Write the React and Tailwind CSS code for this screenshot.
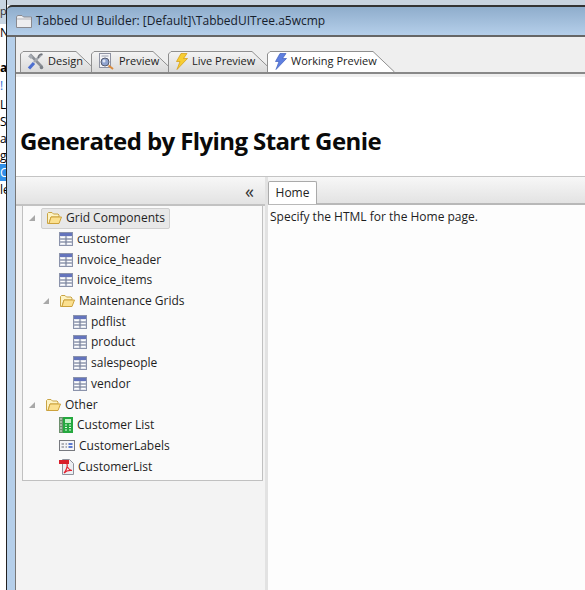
const font = { fontFamily: '"Open Sans", "Noto Sans", sans-serif' };

function FolderIcon() {
  return (
    <svg width="16" height="14" viewBox="0 0 16 14" className="shrink-0">
      <path d="M1.5 12.5V2.5L2.5 1.5H6L7.5 3H12L13 4V6H5L3 12.5Z" fill="#fdf3c4" stroke="#c9a445" />
      <path d="M3 12.5L5 6H15.5L13 12.5Z" fill="#fbe08f" stroke="#cda23c" />
    </svg>
  );
}

function GridIcon() {
  return (
    <svg width="14" height="14" viewBox="0 0 14 14" className="shrink-0">
      <rect x="0.5" y="0.5" width="13" height="13" fill="#e4e7ef" stroke="#8b93ab" />
      <rect x="1" y="1" width="12" height="3" fill="#6474bc" />
      <path d="M7 4V13M1 7H13M1 10H13" stroke="#6f7893" />
      <path d="M2 5.5H5.5M8.5 5.5H12M2 8.5H5.5M8.5 8.5H12M2 11.5H5.5M8.5 11.5H12" stroke="#fff" />
    </svg>
  );
}

function ListIcon() {
  return (
    <svg width="14" height="16" viewBox="0 0 14 16" className="shrink-0">
      <rect x="0" y="0" width="4" height="16" fill="#6d8f6d" />
      <path d="M1 2H3M1 5H3M1 8H3M1 11H3M1 14H3" stroke="#dfe9df" />
      <rect x="4" y="0" width="10" height="16" fill="#25a83f" />
      <rect x="6" y="2" width="6" height="4" fill="#c6f2c8" />
      <path d="M6 8H8M10 8H12M6 10.5H8M10 10.5H12M6 13H8M10 13H12" stroke="#e8fbe8" />
    </svg>
  );
}

function LabelIcon() {
  return (
    <svg width="16" height="11" viewBox="0 0 16 11" className="shrink-0">
      <rect x="0.5" y="0.5" width="15" height="10" fill="#f4f4f6" stroke="#77797f" />
      <path d="M2.5 4H5M6.5 4H8M2.5 7H5M6.5 7H8" stroke="#6a6d78" />
      <rect x="9.5" y="3" width="4" height="2" fill="#5d7bd0" />
      <rect x="9.5" y="6" width="4" height="2" fill="#5d7bd0" />
    </svg>
  );
}

function PdfIcon() {
  return (
    <svg width="15" height="16" viewBox="0 0 15 16" className="shrink-0">
      <path d="M3.5 0.5H10.5L14.5 4.5V15.5H3.5Z" fill="#eceef2" stroke="#8e929c" />
      <rect x="0" y="1" width="10" height="4" fill="#d81e2a" />
      <path d="M5 14C7 12 9 7 8 5C8 8 10 11 13 11.5C10 11 7 12 5 14Z" fill="none" stroke="#e3212d" strokeWidth="1.2" />
    </svg>
  );
}

function BoltIcon({ fill, edge }) {
  return (
    <svg width="13" height="17" viewBox="0 0 13 17" className="shrink-0">
      <path d="M6 0.5H12L8.5 5.5H12.5L2 16.5L5 8.5H1.5Z" fill={fill} stroke={edge} strokeWidth="0.7" />
    </svg>
  );
}

function ToolsIcon() {
  return (
    <svg width="17" height="17" viewBox="0 0 17 17" className="shrink-0">
      <path d="M3 1.5L15 14" stroke="#8b8f96" strokeWidth="2.6" />
      <path d="M1 3.5L3.5 1L6 4L4 6Z" fill="#a7abb2" />
      <path d="M15 1L10 6L7 9" stroke="#a5a9b0" strokeWidth="2.4" fill="none" />
      <path d="M7 10L2 15.5" stroke="#4d6fd0" strokeWidth="3.2" />
      <circle cx="14.5" cy="14.5" r="1.8" fill="#7d8188" />
      <path d="M15.5 1.5A3 3 0 0 0 11.5 5" stroke="#70747b" strokeWidth="1.5" fill="none" />
    </svg>
  );
}

function PreviewIcon() {
  return (
    <svg width="17" height="17" viewBox="0 0 17 17" className="shrink-0">
      <rect x="1.5" y="0.5" width="11" height="14" fill="#f3f3f6" stroke="#8e92a2" />
      <path d="M3.5 3H10.5" stroke="#9aa0b0" />
      <circle cx="7" cy="9" r="4" fill="#8fa3cf" stroke="#565c70" />
      <circle cx="6" cy="8" r="1.5" fill="#dfe7f7" />
      <path d="M10.5 12.5L15 16" stroke="#d98a3d" strokeWidth="2" />
    </svg>
  );
}

function MainTab({ label, icon, width, active, first }) {
  return (
    <div className={`relative h-[21px] shrink-0 ${first ? "" : "-ml-[7px]"} ${active ? "z-10" : ""}`} style={{ width }}>
      <svg width={width} height="21" className="absolute left-0 top-0">
        <defs>
          <linearGradient id="tabfill" x1="0" y1="0" x2="0" y2="1">
            <stop offset="0" stopColor="#f4f4f4" />
            <stop offset="1" stopColor="#dadada" />
          </linearGradient>
        </defs>
        <path
          d={`M0.5 21V3L3 0.5H${width - 22}L${width - 1} 20.5V21`}
          fill={active ? "#ffffff" : "url(#tabfill)"}
          stroke="#8f8f8f"
        />
      </svg>
      <div className="relative flex items-center h-full pl-[7px] gap-[4px] text-[11px] text-[#1c1c1c]">
        {icon}
        <span>{label}</span>
      </div>
    </div>
  );
}

function TreeRow({ indent, arrow, icon, label, selected }) {
  return (
    <div className="flex items-center h-[20.7px]" style={{ paddingLeft: indent }}>
      <span className="w-[12px] shrink-0 flex items-center">
        {arrow && <span className="block w-0 h-0 border-l-[6px] border-l-transparent border-b-[6px] border-b-[#a8a8a8]" />}
      </span>
      <span className={`flex items-center h-[21px] gap-[4px] pl-[4px] pr-[4px] rounded-[2px] ${selected ? "bg-[#e8e8e8] border border-[#cfcfcf]" : ""}`}>
        {icon}
        <span>{label}</span>
      </span>
    </div>
  );
}

const clipped = [
  { h: "h-[18px]", text: "N", cls: "" },
  { h: "h-[17px]", text: "", cls: "" },
  { h: "h-[18px]", text: "a", cls: "font-bold" },
  { h: "h-[19px]", text: "!", cls: "text-[#2f6fd8]" },
  { h: "h-[17px]", text: "L", cls: "" },
  { h: "h-[17px]", text: "S", cls: "" },
  { h: "h-[17px]", text: "as", cls: "" },
  { h: "h-[17px]", text: "ge", cls: "" },
  { h: "h-[17px]", text: "C", cls: "bg-[#2f8fe8] text-white" },
  { h: "h-[15px]", text: "le", cls: "" },
];

function App() {
  return (
    <div className="flex w-[585px] h-[590px] overflow-hidden bg-white text-[12px] text-[#1e1e1e]" style={font}>
      {/* window behind */}
      <div className="w-[6px] shrink-0 flex flex-col overflow-hidden text-[12px] text-black">
        <div className="h-[24px] bg-[#c8d5e2] text-[11px] leading-[22px] text-[#333]">p</div>
        {clipped.map((row, i) => (
          <div key={i} className={`${row.h} ${row.cls} leading-[17px] whitespace-nowrap`}>{row.text}</div>
        ))}
      </div>

      <div className="flex-1 flex flex-col min-w-0 border-l border-[#222]">
        <div className="h-[5px] -mt-0 bg-[#c8d3df] shrink-0" />
        {/* title bar */}
        <div className="h-[32px] shrink-0 border-t-2 border-b-2 border-t-[#333] border-b-[#666] bg-gradient-to-b from-[#8fadcc] to-[#b5cfea] flex items-center pl-[9px] gap-[4px] text-[12px] text-[#16202c] rounded-tl-[5px]">
          <svg width="16" height="13" viewBox="0 0 16 13" className="shrink-0">
            <path d="M0.5 12.5V2L1.5 0.5H6L7.5 2H15.5V12.5Z" fill="#eeeef0" stroke="#8a8a90" />
            <path d="M1 4H15" stroke="#b4b4ba" />
          </svg>
          <span>Tabbed UI Builder: [Default]\TabbedUITree.a5wcmp</span>
        </div>

        <div className="flex-1 flex min-h-0">
          <div className="w-[8px] shrink-0 bg-[#b5cfea]" />
          <div className="flex-1 flex flex-col min-w-0 border-l border-[#777]">
            {/* builder tabs */}
            <div className="h-[35px] shrink-0 bg-[#efefef] flex flex-col justify-end pl-[4px]">
              <div className="flex">
                <MainTab first label="Design" icon={<ToolsIcon />} width={78} />
                <MainTab label="Preview" icon={<PreviewIcon />} width={84} />
                <MainTab label="Live Preview" icon={<BoltIcon fill="#f7cd32" edge="#d29a10" />} width={106} />
                <MainTab active label="Working Preview" icon={<BoltIcon fill="#5e7fe0" edge="#4160bd" />} width={128} />
              </div>
            </div>
            <div className="h-[5px] shrink-0 bg-[#efefef] border-t-2 border-[#888]" />

            <div className="h-[99px] shrink-0 flex items-end pb-[19px] pl-[4px]">
              <h1 className="text-[24px] leading-[32px] font-bold text-[#0a0a0a] tracking-[-0.6px]">Generated by Flying Start Genie</h1>
            </div>

            <div className="flex-1 flex min-h-0 border-t border-[#c4c4c4]">
              {/* left pane */}
              <div className="w-[249px] shrink-0 bg-[#f3f3f3] flex flex-col">
                <div className="h-[29px] shrink-0 bg-gradient-to-b from-[#f7f7f7] to-[#e3e3e3] border-b-2 border-[#c2c2c2] flex items-center justify-end pr-[11px] text-[18px] leading-none text-[#333]">
                  «
                </div>
                <div className="h-[275px] shrink-0 ml-[6px] mr-[2px] bg-[#fafafa] border border-t-0 border-[#c0c0c0] pt-[2px]">
                  <TreeRow indent={6} arrow selected icon={<FolderIcon />} label="Grid Components" />
                  <TreeRow indent={20} icon={<GridIcon />} label="customer" />
                  <TreeRow indent={20} icon={<GridIcon />} label="invoice_header" />
                  <TreeRow indent={20} icon={<GridIcon />} label="invoice_items" />
                  <TreeRow indent={20} arrow icon={<FolderIcon />} label="Maintenance Grids" />
                  <TreeRow indent={34} icon={<GridIcon />} label="pdflist" />
                  <TreeRow indent={34} icon={<GridIcon />} label="product" />
                  <TreeRow indent={34} icon={<GridIcon />} label="salespeople" />
                  <TreeRow indent={34} icon={<GridIcon />} label="vendor" />
                  <TreeRow indent={6} arrow icon={<FolderIcon />} label="Other" />
                  <TreeRow indent={20} icon={<ListIcon />} label="Customer List" />
                  <TreeRow indent={20} icon={<LabelIcon />} label="CustomerLabels" />
                  <TreeRow indent={20} icon={<PdfIcon />} label="CustomerList" />
                </div>
              </div>
              <div className="w-[3px] shrink-0 bg-[#e2e2e2]" />

              {/* right pane */}
              <div className="flex-1 min-w-0 flex flex-col bg-[#fdfdfd]">
                <div className="h-[28px] shrink-0 bg-gradient-to-b from-[#f7f7f7] to-[#e3e3e3] border-b-2 border-[#b8b8b8] flex items-end">
                  <div className="h-[23px] w-[49px] -mb-[1px] bg-white border border-b-0 border-[#aaa] rounded-t-[2px] flex items-center justify-center text-[#222]">
                    Home
                  </div>
                </div>
                <p className="pl-[2px] pt-[3px] leading-[17px]">Specify the HTML for the Home page.</p>
              </div>
            </div>
          </div>
        </div>
      </div>
    </div>
  );
}

export default App;
